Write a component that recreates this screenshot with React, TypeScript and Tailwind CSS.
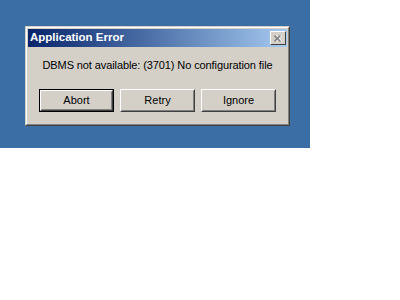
function CloseIcon() {
  return (
    <svg width="8" height="7" viewBox="0 0 8 7" className="block">
      <path d="M1 1.5 L7 7.5 M7 1.5 L1 7.5" transform="translate(0.5,-1)" stroke="#ffffff" strokeWidth="1.6" fill="none" />
      <path d="M0 0.5 L6 6.5 M6 0.5 L0 6.5" transform="translate(0.5,0)" stroke="#808080" strokeWidth="1.6" fill="none" />
    </svg>
  )
}

function ClassicButton({ label, isDefault }: { label: string; isDefault?: boolean }) {
  const inner = (
    <div className="flex-1 border border-t-white border-l-white border-r-[#404040] border-b-[#404040]">
      <div className="h-full flex items-center justify-center border border-t-[#d4d0c8] border-l-[#d4d0c8] border-r-[#808080] border-b-[#808080] bg-[#d4d0c8]">
        {label}
      </div>
    </div>
  )
  return (
    <div className={`w-[75px] h-[23px] flex ${isDefault ? "border border-black" : ""}`}>
      {inner}
    </div>
  )
}

export default function App() {
  return (
    <div className="w-[400px] h-[300px] bg-white" style={{ fontFamily: '"Liberation Sans", Arial, sans-serif' }}>
      <div className="w-[310px] h-[148px] bg-[#3a6ea5] pt-[26px] pl-[25px]">
        {/* dialog frame */}
        <div className="w-[265px] h-[100px] border border-t-[#d4d0c8] border-l-[#d4d0c8] border-r-[#404040] border-b-[#404040]">
          <div className="h-full border border-t-white border-l-white border-r-[#808080] border-b-[#808080] bg-[#d4d0c8] p-px flex flex-col">
            {/* title bar */}
            <div className="h-[18px] flex items-center justify-between pl-[2px] pr-px bg-gradient-to-r from-[#0a246a] to-[#a6caf0]">
              <span className="text-white font-bold text-[11.5px] leading-none">Application Error</span>
              <div className="w-[16px] h-[14px] border border-t-white border-l-white border-r-[#404040] border-b-[#404040] bg-[#d4d0c8] flex items-center justify-center">
                <CloseIcon />
              </div>
            </div>
            {/* message */}
            <div className="text-[11px] text-black text-center mt-[12px] leading-[13px] tracking-[-0.1px]">
              DBMS not available: (3701) No configuration file
            </div>
            {/* buttons */}
            <div className="flex gap-[6px] pl-[11px] mt-[17px] text-[11px] text-black">
              <ClassicButton label="Abort" isDefault />
              <ClassicButton label="Retry" />
              <ClassicButton label="Ignore" />
            </div>
          </div>
        </div>
      </div>
    </div>
  )
}
